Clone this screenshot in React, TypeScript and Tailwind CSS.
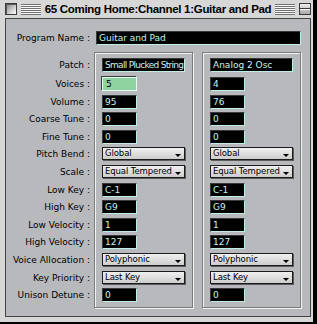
import React from "react";

type Cell =
  | { kind: "field"; value: string; wide?: boolean; active?: boolean; tight?: boolean }
  | { kind: "popup"; value: string };

type Row = { label: string; l: Cell; r: Cell };

const rows: Row[] = [
  {
    label: "Patch",
    l: { kind: "field", value: "Small Plucked String", wide: true, tight: true },
    r: { kind: "field", value: "Analog 2 Osc", wide: true },
  },
  { label: "Voices", l: { kind: "field", value: "5", active: true }, r: { kind: "field", value: "4" } },
  { label: "Volume", l: { kind: "field", value: "95" }, r: { kind: "field", value: "76" } },
  { label: "Coarse Tune", l: { kind: "field", value: "0" }, r: { kind: "field", value: "0" } },
  { label: "Fine Tune", l: { kind: "field", value: "0" }, r: { kind: "field", value: "0" } },
  { label: "Pitch Bend", l: { kind: "popup", value: "Global" }, r: { kind: "popup", value: "Global" } },
  { label: "Scale", l: { kind: "popup", value: "Equal Tempered" }, r: { kind: "popup", value: "Equal Tempered" } },
  { label: "Low Key", l: { kind: "field", value: "C-1" }, r: { kind: "field", value: "C-1" } },
  { label: "High Key", l: { kind: "field", value: "G9" }, r: { kind: "field", value: "G9" } },
  { label: "Low Velocity", l: { kind: "field", value: "1" }, r: { kind: "field", value: "1" } },
  { label: "High Velocity", l: { kind: "field", value: "127" }, r: { kind: "field", value: "127" } },
  { label: "Voice Allocation", l: { kind: "popup", value: "Polyphonic" }, r: { kind: "popup", value: "Polyphonic" } },
  { label: "Key Priority", l: { kind: "popup", value: "Last Key" }, r: { kind: "popup", value: "Last Key" } },
  { label: "Unison Detune", l: { kind: "field", value: "0" }, r: { kind: "field", value: "0" } },
];

const geneva = { fontFamily: '"DejaVu Sans", Verdana, sans-serif' };

function Field({ c }: { c: Extract<Cell, { kind: "field" }> }) {
  const width = c.wide ? "w-[83px]" : "w-[35px]";
  if (c.active) {
    return (
      <div
        className={`${width} h-[14px] border border-[#e6fff6] shadow-[-1px_-1px_0_#3a3a3a] bg-[#8fd3a0] text-black text-[9px] leading-[12px] pl-[3px] whitespace-nowrap overflow-hidden`}
        style={geneva}
      >
        {c.value}
      </div>
    );
  }
  return (
    <div
      className={`${width} h-[14px] border border-t-[#3a3a3a] border-l-[#3a3a3a] border-b-[#bdeee8] border-r-[#bdeee8] bg-black text-[#c8f5ef] text-[9px] leading-[12px] pl-[2px] whitespace-nowrap overflow-hidden ${
        c.tight ? "tracking-[-0.7px]" : ""
      }`}
      style={geneva}
    >
      {c.value}
    </div>
  );
}

function Popup({ value }: { value: string }) {
  return (
    <div
      className="w-[83px] h-[13px] border border-[#1c1c1c] bg-gradient-to-b from-[#f0f0f0] to-[#cdcdcd] shadow-[1px_1px_0_#5c5c5c] flex items-end justify-between pl-[2px] pr-[3px]"
      style={geneva}
    >
      <span className="text-black text-[8.5px] leading-[11px] self-center whitespace-nowrap tracking-[-0.1px]">{value}</span>
      <span className="mb-[2px] w-0 h-0 border-l-[3px] border-r-[3px] border-t-[3px] border-l-transparent border-r-transparent border-t-black" />
    </div>
  );
}

function CellView({ c }: { c: Cell }) {
  return c.kind === "popup" ? <Popup value={c.value} /> : <Field c={c} />;
}

function Group({ side }: { side: "l" | "r" }) {
  return (
    <div className="w-[99px] h-[256px] border border-[#7c7c7c] shadow-[inset_1px_1px_0_#f2f2f2,1px_1px_0_#f2f2f2] pl-[7px] pt-[5px] flex flex-col">
      {rows.map((row, i) => (
        <div key={i} className={i === 0 ? "h-[19px] shrink-0" : "h-[17.6px] shrink-0"}>
          <CellView c={row[side]} />
        </div>
      ))}
    </div>
  );
}

function Stripes() {
  return (
    <div className="flex-1 h-[11px] bg-[repeating-linear-gradient(to_bottom,#737373_0px,#737373_1px,#f6f6f6_1px,#f6f6f6_2px)]" />
  );
}

export default function App() {
  return (
    <div className="w-[317px] h-[324px] bg-black overflow-hidden flex">
      <div className="w-[313px] h-[322px] bg-[#d7d7d7] flex flex-col">
        {/* Title bar */}
        <div className="h-[18px] shrink-0 flex items-center pl-[5px] pr-[2px]">
          <div className="w-[12px] h-[12px] border border-[#3a3a3a] bg-gradient-to-br from-[#7e7e7e] via-[#c4c4c4] to-[#ffffff] shadow-[inset_1px_1px_0_#5a5a5a]" />
          <div className="flex-1 flex items-center ml-[4px] mr-[4px]">
            <Stripes />
            <div
              className="px-[4px] text-black text-[11.5px] font-bold leading-[14px] whitespace-nowrap tracking-[-0.3px]"
              style={{ fontFamily: '"Liberation Sans", Arial, sans-serif' }}
            >
              65 Coming Home:Channel 1:Guitar and Pad
            </div>
            <Stripes />
          </div>
          <div className="w-[12px] h-[12px] border border-[#3a3a3a] bg-gradient-to-b from-[#eeeeee] to-[#a8a8a8] flex flex-col justify-center">
            <div className="h-[1px] bg-[#3a3a3a]" />
            <div className="h-[1px] bg-[#f8f8f8]" />
          </div>
        </div>

        {/* Body */}
        <div className="flex-1 flex pl-[5px] pr-[2px] pb-[5px]">
          <div className="flex-1 border border-[#454545] bg-[#b8b9bd] flex flex-col">
            {/* Program name */}
            <div className="mt-[12px] flex items-center">
              <div
                className="w-[84px] text-right text-black text-[9px] leading-[14px] whitespace-nowrap"
                style={geneva}
              >
                Program Name :
              </div>
              <div
                className="ml-[6px] w-[205px] h-[14px] border border-t-[#3a3a3a] border-l-[#3a3a3a] border-b-[#bdeee8] border-r-[#bdeee8] bg-black text-[#c8f5ef] text-[9px] leading-[12px] pl-[2px]"
                style={geneva}
              >
                Guitar and Pad
              </div>
            </div>

            {/* Groups */}
            <div className="mt-[7px] flex">
              <div className="w-[84px] pt-[6px] flex flex-col">
                {rows.map((row, i) => (
                  <div key={i} className={i === 0 ? "h-[19px] shrink-0" : "h-[17.6px] shrink-0"}>
                    <div
                      className="h-[14px] text-right text-black text-[9px] leading-[14px] whitespace-nowrap"
                      style={geneva}
                    >
                      {row.label} :
                    </div>
                  </div>
                ))}
              </div>
              <div className="ml-[4px]">
                <Group side="l" />
              </div>
              <div className="ml-[9px]">
                <Group side="r" />
              </div>
            </div>
          </div>
        </div>
      </div>
    </div>
  );
}
